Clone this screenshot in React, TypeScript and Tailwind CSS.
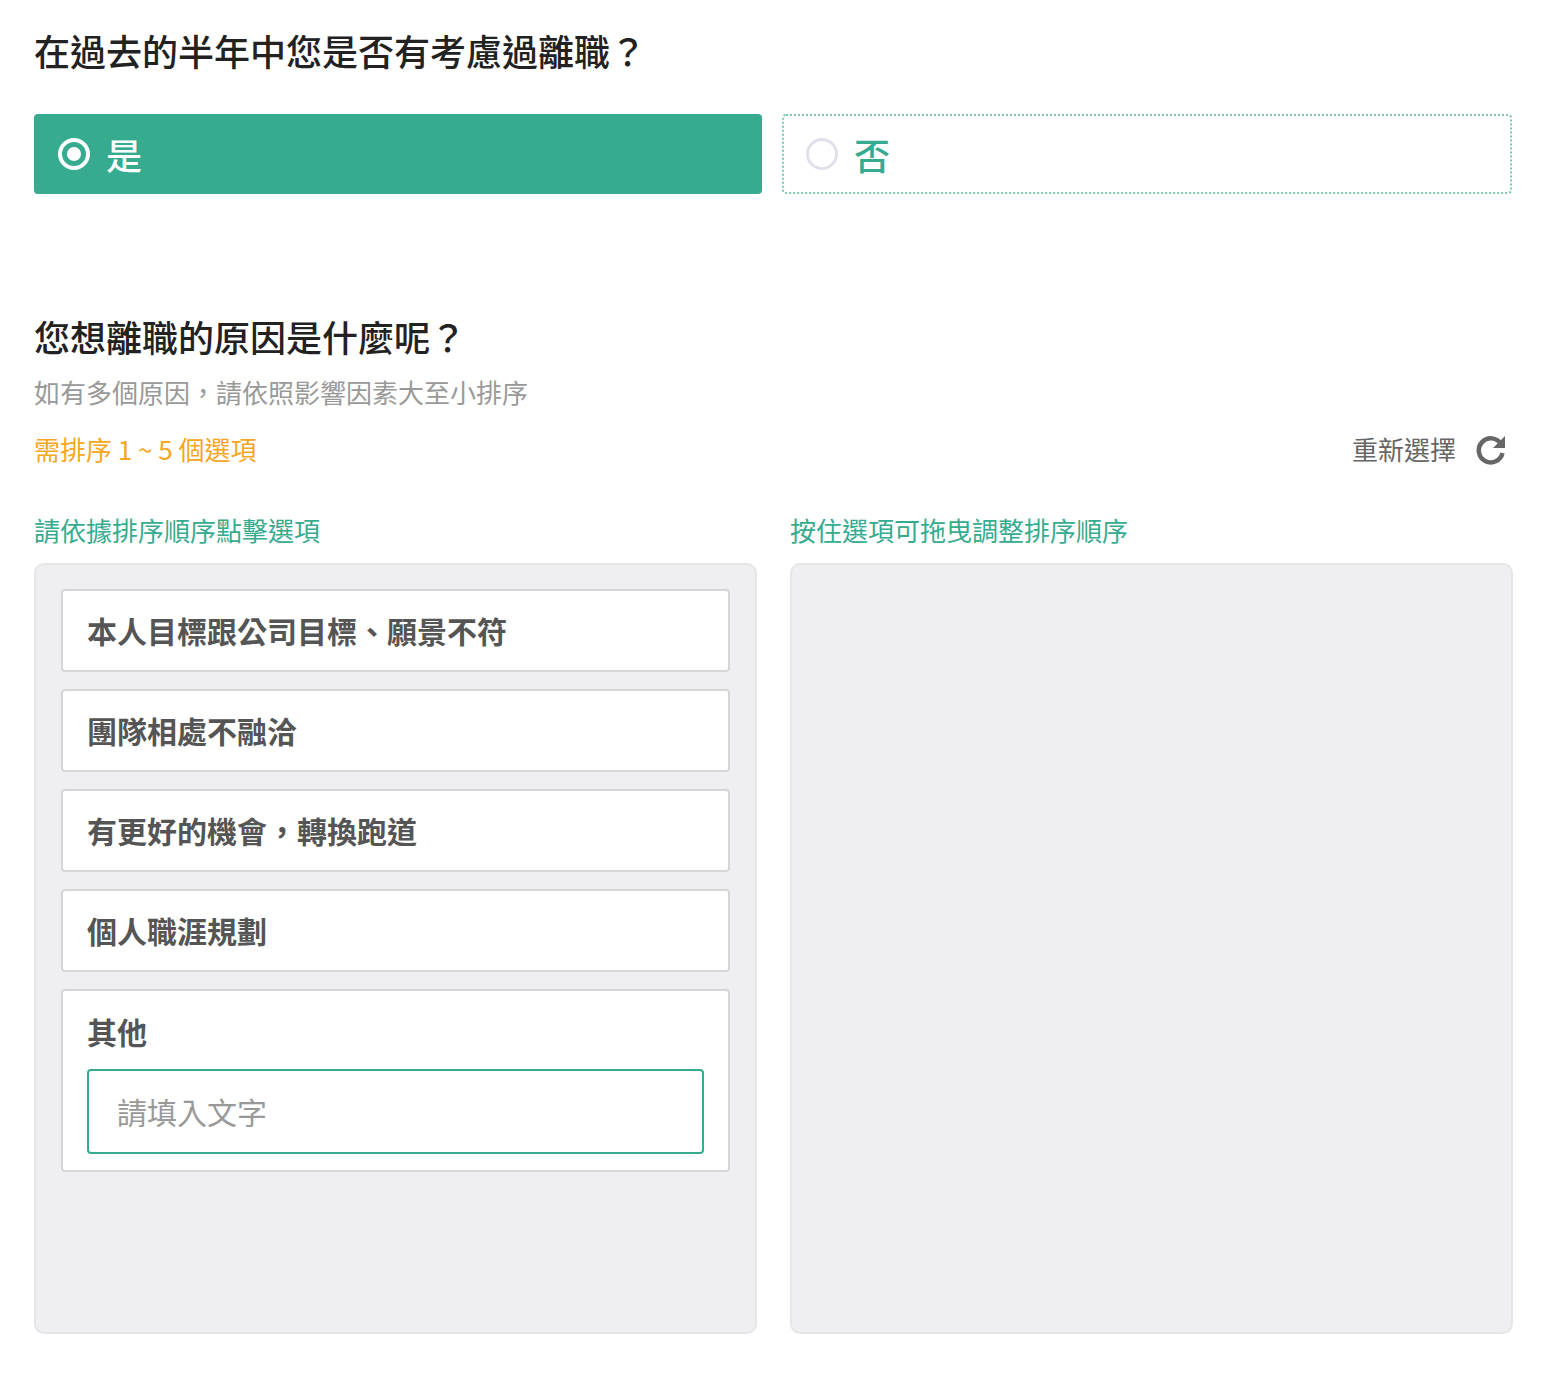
import React from "react";

const items = ["本人目標跟公司目標、願景不符", "團隊相處不融洽", "有更好的機會，轉換跑道", "個人職涯規劃"];

export default function App() {
  return (
    <div className="bg-white w-[1548px] h-[1388px] px-[34px] pt-[24px]" style={{ fontFamily: '"Noto Sans CJK TC", "Noto Sans", sans-serif' }}>
      <h1 className="text-[36px] leading-[52px] text-[#222] font-medium">在過去的半年中您是否有考慮過離職？</h1>
      <div className="flex gap-[20px] mt-[38px] w-[1478px]">
        <div className="flex-1 h-[80px] bg-[#36ab90] rounded-[4px] flex items-center pl-[24px]">
          <div className="w-[32px] h-[32px] rounded-full border-[4px] border-white flex items-center justify-center">
            <div className="w-[14px] h-[14px] rounded-full bg-white" />
          </div>
          <span className="ml-[16px] text-white text-[36px] font-medium">是</span>
        </div>
        <div className="flex-1 h-[80px] border-2 border-dotted border-[#7cc7b4] rounded-[4px] flex items-center pl-[22px]">
          <div className="w-[32px] h-[32px] rounded-full border-[3px] border-[#e0e0ea]" />
          <span className="ml-[16px] text-[#36ab90] text-[36px] font-medium">否</span>
        </div>
      </div>
      <h2 className="mt-[116px] text-[36px] leading-[52px] text-[#222] font-medium">您想離職的原因是什麼呢？</h2>
      <p className="mt-[10px] text-[26px] text-[#999]">如有多個原因，請依照影響因素大至小排序</p>
      <div className="flex justify-between items-center mt-[18px] w-[1478px]">
        <span className="text-[26px] text-[#f5a623]">需排序 1 ~ 5 個選項</span>
        <span className="flex items-center text-[26px] text-[#666] pr-[4px]">
          重新選擇
          <svg className="ml-[18px]" width="34" height="34" viewBox="0 0 34 34">
            <path d="M27 12 A12 12 0 1 0 28.5 21" fill="none" stroke="#666" strokeWidth="4.5" />
            <path d="M31 4 L31 16 L19 16 Z" fill="#666" />
          </svg>
        </span>
      </div>
      <div className="flex gap-[33px] mt-[42px] w-[1479px]">
        <div className="flex-1">
          <p className="text-[26px] text-[#36ab90]">請依據排序順序點擊選項</p>
          <div className="mt-[14px] h-[771px] bg-[#efeef1] border-2 border-[#e6e5e8] rounded-[10px] px-[25px] pt-[24px] flex flex-col gap-[17px]">
            {items.map((t) => (
              <div key={t} className="h-[83px] bg-white border-2 border-[#d6d6d8] rounded-[4px] flex items-center pl-[24px] text-[30px] font-bold text-[#555]">{t}</div>
            ))}
            <div className="bg-white border-2 border-[#d6d6d8] rounded-[4px] px-[24px] pt-[18px] pb-[16px]">
              <div className="text-[30px] font-bold text-[#555] leading-[44px]">其他</div>
              <div className="mt-[16px] h-[85px] border-2 border-[#36ab90] rounded-[4px] flex items-center pl-[28px] text-[30px] text-[#999]">請填入文字</div>
            </div>
          </div>
        </div>
        <div className="flex-1">
          <p className="text-[26px] text-[#36ab90]">按住選項可拖曳調整排序順序</p>
          <div className="mt-[14px] h-[771px] bg-[#efeef1] border-2 border-[#e6e5e8] rounded-[10px]" />
        </div>
      </div>
    </div>
  );
}
